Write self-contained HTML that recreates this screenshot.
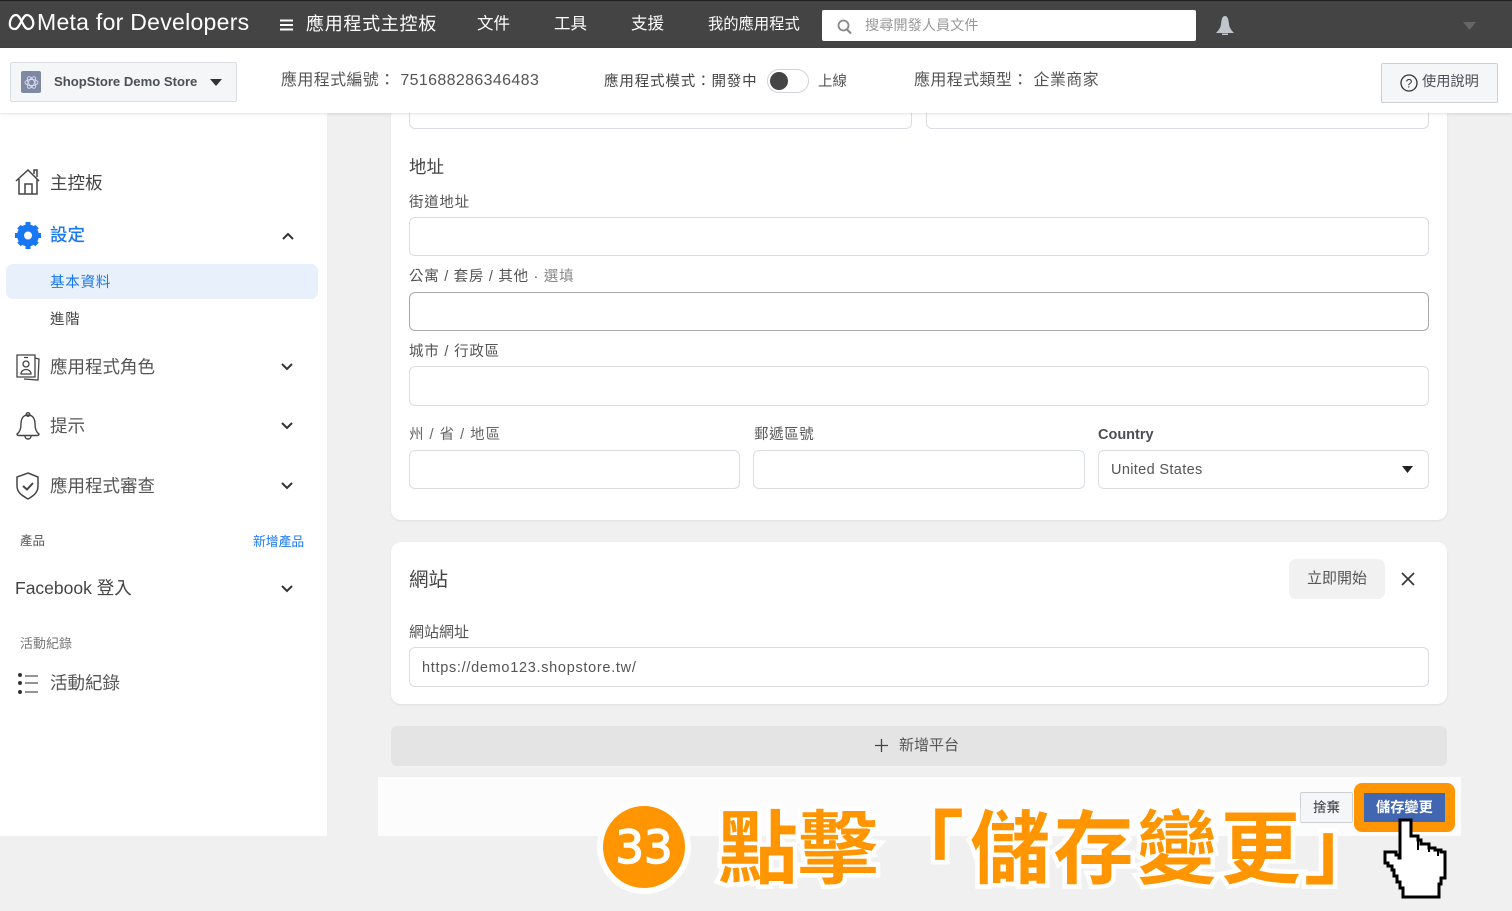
<!DOCTYPE html>
<html><head><meta charset="utf-8"><style>
*{box-sizing:border-box}
html,body{margin:0;padding:0;width:1512px;height:911px;overflow:hidden;background:#f0f0f0;font-family:"Liberation Sans","Noto Sans CJK TC",sans-serif;color:#444}
.a{position:absolute;white-space:nowrap}
.t{position:absolute;white-space:nowrap;line-height:20px}
.i{position:absolute;background:#fff;border:1px solid #dadde1;border-radius:6px}
svg{position:absolute;overflow:visible}
.ann{position:absolute;white-space:nowrap;font-weight:700;color:#ff9500;-webkit-text-stroke:9px #fff;paint-order:stroke fill;line-height:90px;font-size:80px;font-family:'Liberation Sans','WenQuanYi Zen Hei','Noto Sans CJK TC',sans-serif}
</style></head><body>
<div class="a" style="left:0;top:0;width:1512px;height:48px;background:#444;border-top:1px solid #222"></div>
<svg style="left:8px;top:13px" width="27" height="18" viewBox="0 0 27 18"><path d="M2 13C1 8 4 2 8 2c5 0 7 14 12 14 4 0 6-4 5-8-1-4-4-6-6-6-5 0-7 14-12 14-3 0-4-1-5-3" fill="none" stroke="#fff" stroke-width="2.200"/></svg>
<div class="t" style="left:37px;top:9px;font-size:23px;line-height:26px;color:#fff;letter-spacing:.28px">Meta for Developers</div>
<svg style="left:280px;top:19px" width="13" height="12"><path d="M0 1.500h13M0 6h13M0 10.500h13" stroke="#fff" stroke-width="2"/></svg>
<div class="t" style="left:306px;top:13px;font-size:18px;line-height:22px;color:#fff;letter-spacing:.7px">應用程式主控板</div>
<div class="t" style="left:477px;top:14px;font-size:16.500px;color:#fff">文件</div>
<div class="t" style="left:554px;top:14px;font-size:16.500px;color:#fff">工具</div>
<div class="t" style="left:631px;top:14px;font-size:16.500px;color:#fff">支援</div>
<div class="t" style="left:708px;top:15px;font-size:15.300px;color:#fff">我的應用程式</div>
<div class="a" style="left:822px;top:10px;width:374px;height:31px;background:#fff;border-radius:2px"></div>
<svg style="left:837px;top:19px" width="16" height="16"><circle cx="6.500" cy="6.500" r="5" fill="none" stroke="#888" stroke-width="1.800"/><path d="M10 10.500l4 4" stroke="#888" stroke-width="2"/></svg>
<div class="t" style="left:865px;top:16px;font-size:14.200px;color:#9a9a9a">搜尋開發人員文件</div>
<svg style="left:1215px;top:15px" width="20" height="21"><path d="M10 1c-3 0-3.500 4-4 8-.4 3.500-2 6-5 9h18c-3-3-4.600-5.500-5-9-.5-4-1-8-4-8zM7 18.500h6V20H7z" fill="#c2c5cc"/></svg>
<svg style="left:1463px;top:22px" width="13" height="8"><path d="M0 0h13L6.500 8z" fill="#666"/></svg>

<div class="a" style="left:0;top:48px;width:1512px;height:65px;background:#fff;box-shadow:0 1px 3px rgba(0,0,0,.12);z-index:3"></div>
<div style="position:absolute;left:0;top:0;z-index:4;width:1512px">
<div class="a" style="left:10px;top:62px;width:227px;height:40px;background:#f5f6f7;border:1px solid #dadde1;border-radius:2px"></div>
<div class="a" style="left:21px;top:71px;width:20px;height:22px;background:#7e8aa3;border-radius:2px"></div>
<svg style="left:24px;top:75px" width="15" height="15" viewBox="0 0 15 15"><g fill="none" stroke="#dde" stroke-width=".9"><ellipse cx="7.500" cy="7.500" rx="6.500" ry="3"/><ellipse cx="7.500" cy="7.500" rx="6.500" ry="3" transform="rotate(60 7.500 7.500)"/><ellipse cx="7.500" cy="7.500" rx="6.500" ry="3" transform="rotate(120 7.500 7.500)"/></g></svg>
<div class="t" style="left:54px;top:72px;font-size:13.100px;font-weight:700;color:#4b4f56">ShopStore Demo Store</div>
<svg style="left:210px;top:79px" width="12" height="8"><path d="M0 0h12L6 7z" fill="#333"/></svg>
<div class="t" style="left:281px;top:70px;font-size:16px;color:#555;letter-spacing:.36px;margin-top:1px">應用程式編號： 751688286346483</div>
<div class="t" style="left:604px;top:71px;font-size:14.500px;color:#444;letter-spacing:.85px;margin-top:1px">應用程式模式：開發中</div>
<div class="a" style="left:767px;top:69px;width:42px;height:24px;background:#fff;border:1px solid #d0d3d8;border-radius:12px"></div>
<div class="a" style="left:770px;top:72px;width:18px;height:18px;background:#444;border-radius:50%"></div>
<div class="t" style="left:818px;top:72px;font-size:14.500px;color:#555">上線</div>
<div class="t" style="left:914px;top:71px;font-size:16px;color:#555;letter-spacing:.38px">應用程式類型： 企業商家</div>
<div class="a" style="left:1381px;top:63px;width:117px;height:40px;background:#f5f6f7;border:1px solid #ccd0d5;border-radius:2px"></div>
<svg style="left:1400px;top:74px" width="18" height="18"><circle cx="9" cy="9" r="8" fill="none" stroke="#333" stroke-width="1.300"/><text x="9" y="13.500" font-size="12" text-anchor="middle" fill="#333" font-family="Liberation Sans">?</text></svg>
<div class="t" style="left:1422px;top:72px;font-size:14.200px;color:#4b4f56">使用說明</div>
</div>

<div class="a" style="left:0;top:113px;width:327px;height:723px;background:#fff"></div>
<svg style="left:15px;top:168px" width="26" height="27" fill="none" stroke="#444" stroke-width="1.500"><path d="M1 13L13 2l11 11M4 11v15h18V11M10 26V16h7v10M19 6V2h3v7"/></svg>
<div class="t" style="left:50px;top:173px;font-size:17.500px;color:#444">主控板</div>
<svg style="left:15px;top:222px" width="26" height="27" viewBox="0 0 26 27"><circle cx="13" cy="13.500" r="7.500" fill="none" stroke="#1877f2" stroke-width="7"/><g stroke="#1877f2" stroke-width="5"><path d="M13 0v5M13 22v5M0 13.500h5M21 13.500h5M4 4.500l3 3M19 19.500l3 3M22 4.500l-3 3M7 19.500l-3 3"/></g></svg>
<div class="t" style="left:50px;top:225px;font-size:17.500px;color:#1877f2;font-weight:500">設定</div>
<svg style="left:282px;top:232px" width="12" height="8" fill="none" stroke="#333" stroke-width="2"><path d="M1 7l5-5 5 5"/></svg>
<div class="a" style="left:6px;top:264px;width:312px;height:35px;background:#e7f0fb;border-radius:7px"></div>
<div class="t" style="left:50px;top:273px;font-size:14.500px;color:#1877f2;letter-spacing:.8px">基本資料</div>
<div class="t" style="left:50px;top:310px;font-size:14.500px;color:#444;letter-spacing:.7px">進階</div>
<svg style="left:15px;top:353px" width="26" height="28" fill="none" stroke="#444" stroke-width="1.300"><path d="M2 2l18 0 0 22-18 0zM20 5l4 1-1 21-14-1"/><circle cx="11" cy="11" r="3"/><path d="M6 21c0-6 10-6 10 0zM9 4.500h4"/></svg>
<div class="t" style="left:50px;top:357px;font-size:17.500px;color:#555">應用程式角色</div>
<svg style="left:281px;top:363px" width="12" height="8" fill="none" stroke="#333" stroke-width="2"><path d="M1 1l5 5 5-5"/></svg>
<svg style="left:16px;top:412px" width="24" height="28" fill="none" stroke="#444" stroke-width="1.400"><path d="M12 3c-5 0-7 4-7 9 0 4-1 8-4 10 0 1 1 1.500 2 1.500h18c1 0 2-.5 2-1.500-3-2-4-6-4-10 0-5-2-9-7-9z"/><circle cx="12" cy="2.500" r="1.800"/><path d="M9 24c0 4 6 4 6 0"/></svg>
<div class="t" style="left:50px;top:416px;font-size:17.500px;color:#555">提示</div>
<svg style="left:281px;top:422px" width="12" height="8" fill="none" stroke="#333" stroke-width="2"><path d="M1 1l5 5 5-5"/></svg>
<svg style="left:16px;top:472px" width="24" height="28" fill="none" stroke="#444" stroke-width="1.500"><path d="M12 1l10 4v9c0 7-5 10-10 13C7 24 1 21 1 14V5z"/><path d="M7 14l4 3.500 6-6.500" stroke-width="2"/></svg>
<div class="t" style="left:50px;top:476px;font-size:17.500px;color:#555">應用程式審查</div>
<svg style="left:281px;top:482px" width="12" height="8" fill="none" stroke="#333" stroke-width="2"><path d="M1 1l5 5 5-5"/></svg>
<div class="t" style="left:20px;top:531px;font-size:12.500px;color:#555">產品</div>
<div class="t" style="left:253px;top:532px;font-size:12.800px;color:#1877f2">新增產品</div>
<div class="t" style="left:15px;top:578px;font-size:17.500px;color:#444">Facebook 登入</div>
<svg style="left:281px;top:585px" width="12" height="8" fill="none" stroke="#333" stroke-width="2"><path d="M1 1l5 5 5-5"/></svg>
<div class="t" style="left:20px;top:634px;font-size:13px;color:#777">活動紀錄</div>
<svg style="left:17px;top:672px" width="22" height="22"><path d="M8 4h13M8 11h13M8 20h13" stroke="#555" stroke-width="1.300"/><circle cx="3" cy="3" r="2" fill="#333"/><circle cx="3" cy="11" r="2" fill="#333"/><circle cx="3" cy="20" r="2" fill="#333"/></svg>
<div class="t" style="left:50px;top:673px;font-size:17.500px;color:#555">活動紀錄</div>

<div class="a" style="left:391px;top:100px;width:1056px;height:420px;background:#fff;border-radius:10px;box-shadow:0 1px 2px rgba(0,0,0,.08)"></div>
<div class="i" style="left:409px;top:100px;width:503px;height:29px"></div>
<div class="i" style="left:926px;top:100px;width:503px;height:29px"></div>
<div class="t" style="left:409px;top:157px;font-size:17.500px;color:#444">地址</div>
<div class="t" style="left:409px;top:193px;font-size:14.500px;color:#555;letter-spacing:.7px">街道地址</div>
<div class="i" style="left:409px;top:217px;width:1020px;height:39px"></div>
<div class="t" style="left:409px;top:267px;font-size:14.500px;color:#555;letter-spacing:.72px">公寓 / 套房 / 其他 · <span style="color:#888">選填</span></div>
<div class="i" style="left:409px;top:292px;width:1020px;height:39px;border-color:#a8a8a8"></div>
<div class="t" style="left:409px;top:342px;font-size:14.500px;color:#555;letter-spacing:.8px">城市 / 行政區</div>
<div class="i" style="left:409px;top:366px;width:1020px;height:40px"></div>
<div class="t" style="left:409px;top:425px;font-size:14.500px;color:#666;letter-spacing:1px">州 / 省 / 地區</div>
<div class="t" style="left:754px;top:425px;font-size:14.500px;color:#555;letter-spacing:.6px">郵遞區號</div>
<div class="t" style="left:1098px;top:425px;font-size:14.500px;font-weight:700;color:#4b4f56">Country</div>
<div class="i" style="left:409px;top:450px;width:331px;height:39px"></div>
<div class="i" style="left:753px;top:450px;width:332px;height:39px"></div>
<div class="i" style="left:1098px;top:450px;width:331px;height:39px"></div>
<div class="t" style="left:1111px;top:460px;font-size:14.500px;color:#555;letter-spacing:.35px">United States</div>
<svg style="left:1402px;top:466px" width="11" height="7"><path d="M0 0h11L5.500 7z" fill="#222"/></svg>

<div class="a" style="left:391px;top:542px;width:1056px;height:162px;background:#fff;border-radius:10px;box-shadow:0 1px 2px rgba(0,0,0,.08)"></div>
<div class="t" style="left:409px;top:570px;font-size:19.500px;color:#444">網站</div>
<div class="a" style="left:1289px;top:559px;width:96px;height:40px;background:#f1f1f1;border-radius:7px"></div>
<div class="t" style="left:1307px;top:569px;font-size:15px;color:#555">立即開始</div>
<svg style="left:1401px;top:572px" width="14" height="14"><path d="M1 1l12 12M13 1L1 13" stroke="#333" stroke-width="1.600"/></svg>
<div class="t" style="left:409px;top:623px;font-size:15px;color:#555">網站網址</div>
<div class="i" style="left:409px;top:647px;width:1020px;height:40px"></div>
<div class="t" style="left:422px;top:658px;font-size:14.500px;color:#555;letter-spacing:.7px">https://demo123.shopstore.tw/</div>
<div class="a" style="left:391px;top:726px;width:1056px;height:40px;background:#e4e4e4;border-radius:6px"></div>
<svg style="left:875px;top:739px" width="13" height="13"><path d="M6.500 0v13M0 6.500h13" stroke="#444" stroke-width="1.300"/></svg>
<div class="t" style="left:899px;top:736px;font-size:15px;color:#555">新增平台</div>

<div class="a" style="left:378px;top:777px;width:1083px;height:59px;background:#fcfcfc"></div>
<div class="a" style="left:1300px;top:792px;width:53px;height:31px;background:#f5f6f7;border:1px solid #ccd0d5;border-radius:2px"></div>
<div class="t" style="left:1313px;top:798px;font-size:13.500px;font-weight:500;color:#4b4f56">捨棄</div>
<div class="a" style="left:1354px;top:783px;width:101px;height:49px;background:#ff9500;border-radius:8px"></div>
<div class="a" style="left:1364px;top:793px;width:81px;height:29px;background:#4267b2"></div>
<div class="t" style="left:1376px;top:798px;font-size:14.200px;font-weight:700;color:#fff">儲存變更</div>

<div class="a" style="left:597px;top:800px;width:94px;height:94px;background:#ff9500;border:6px solid #fff;border-radius:50%"></div>
<div class="t" style="left:597px;top:818px;width:94px;text-align:center;font-family:'DejaVu Sans',sans-serif;font-size:45px;line-height:60px;color:#fff;-webkit-text-stroke:1.500px #fff">33</div>
<div class="ann" style="left:718px;top:805px">點擊</div>
<div class="ann" style="left:884px;top:805px">「</div>
<div class="ann" style="left:970px;top:805px;letter-spacing:3.500px">儲存變更」</div>

<svg style="left:0;top:0" width="1512" height="911" shape-rendering="crispEdges"><path d="M1400 820H1411V836H1418V840H1421V844H1429V848H1435V850H1441V852H1445V878H1441V884H1439V897H1403V888H1400V882H1397V876H1394V870H1392V866H1388V863H1385V852H1396V855H1399V858H1400Z" fill="#fff" stroke="#000" stroke-width="3"/><path d="M1418 836V850M1429 844V852M1438 850V856" stroke="#000" stroke-width="2" fill="none"/></svg>
</body></html>
